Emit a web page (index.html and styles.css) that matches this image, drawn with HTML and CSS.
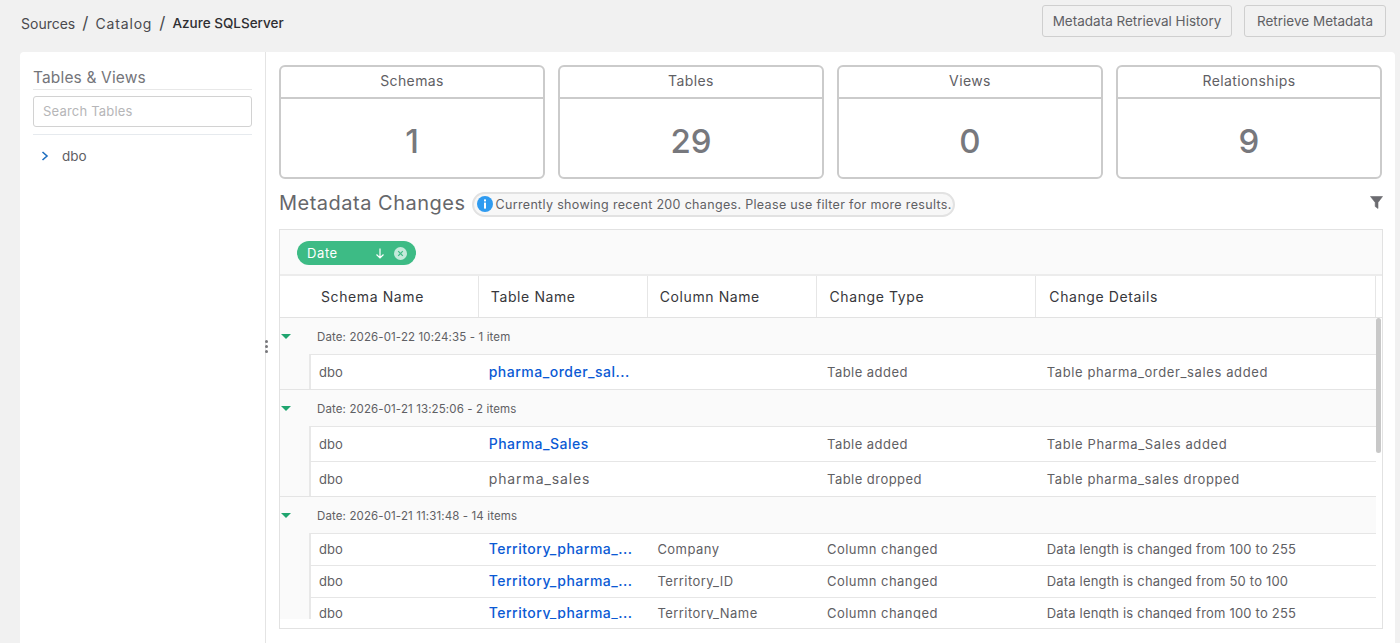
FILE: index.html
```html
<!DOCTYPE html>
<html>
<head>
    <title>Catalog</title>
    <link rel="stylesheet" href="styles.css">
</head>
<body>
    <header class="topBar">
        <nav class="breadcrumb">
            <span>Sources</span><span class="sep">/</span><span class="crumb">Catalog</span><span class="sep">/</span><span class="current">Azure SQLServer</span>
        </nav>
        <div class="topActions">
            <button class="topButton historyButton">Metadata Retrieval History</button>
            <button class="topButton retrieveButton">Retrieve Metadata</button>
        </div>
    </header>

    <main class="panel">
        <aside class="sidebar">
            <h2 class="sideTitle">Tables &amp; Views</h2>
            <input class="searchBox" type="text" placeholder="Search Tables">
            <div class="treeItem">
                <svg class="treeArrow" width="8" height="10" viewBox="0 0 8 10"><path d="M1.5 1 L6 5 L1.5 9" fill="none" stroke="#1f6fc0" stroke-width="1.6"/></svg>
                <span>dbo</span>
            </div>
        </aside>

        <div class="splitter"><i></i><i></i><i></i></div>

        <section class="content">
            <div class="stats">
                <div class="statCard"><div class="statLabel">Schemas</div><div class="statValue">1</div></div>
                <div class="statCard"><div class="statLabel">Tables</div><div class="statValue">29</div></div>
                <div class="statCard"><div class="statLabel">Views</div><div class="statValue">0</div></div>
                <div class="statCard"><div class="statLabel">Relationships</div><div class="statValue">9</div></div>
            </div>

            <div class="changesHead">
                <h2 class="changesTitle">Metadata Changes</h2>
                <div class="notePill">
                    <svg width="16" height="16" viewBox="0 0 16 16"><circle cx="8" cy="8" r="8" fill="#2f9bf0"/><rect x="7" y="6.6" width="2" height="6" fill="#fff"/><rect x="7" y="3.4" width="2" height="2" fill="#fff"/></svg>
                    <span>Currently showing recent 200 changes. Please use filter for more results.</span>
                </div>
                <svg class="filterIcon" width="13" height="13" viewBox="0 0 13 13"><path d="M0.5 0.5 H12.5 L8 6.5 V12.5 L5.2 10.5 V6.5 Z" fill="#6b6b70" stroke="#6b6b70" stroke-width="0.6" stroke-linejoin="round"/></svg>
            </div>

            <div class="grid">
                <div class="groupBar">
                    <div class="chip">
                        <span class="chipText">Date</span>
                        <svg width="10" height="11" viewBox="0 0 10 11"><path d="M5 0.5 V10 M1.5 6.5 L5 10 L8.5 6.5" fill="none" stroke="#fff" stroke-width="1.2"/></svg>
                        <svg width="13" height="13" viewBox="0 0 13 13"><circle cx="6.5" cy="6.5" r="6.5" fill="#c4eadb"/><path d="M4.2 4.2 L8.8 8.8 M8.8 4.2 L4.2 8.8" stroke="#3dbb85" stroke-width="1.2"/></svg>
                    </div>
                </div>

                <div class="headRow">
                    <div class="headCell colSchema">Schema Name</div>
                    <div class="headCell colTable">Table Name</div>
                    <div class="headCell colColumn">Column Name</div>
                    <div class="headCell colType">Change Type</div>
                    <div class="headCell colDetails">Change Details</div>
                </div>

                <div class="gridBody">
                    <div class="gridRows">
                        <div class="groupRow"><span class="caret"></span>Date: 2026-01-22 10:24:35 - 1 item</div>
                        <div class="dataRow tall">
                            <div class="cell colSchema">dbo</div>
                            <div class="cell colTable"><a class="tableLink">pharma_order_sal...</a></div>
                            <div class="cell colColumn"></div>
                            <div class="cell colType">Table added</div>
                            <div class="cell colDetails">Table pharma_order_sales added</div>
                        </div>

                        <div class="groupRow"><span class="caret"></span>Date: 2026-01-21 13:25:06 - 2 items</div>
                        <div class="dataRow tall">
                            <div class="cell colSchema">dbo</div>
                            <div class="cell colTable"><a class="tableLink">Pharma_Sales</a></div>
                            <div class="cell colColumn"></div>
                            <div class="cell colType">Table added</div>
                            <div class="cell colDetails">Table Pharma_Sales added</div>
                        </div>
                        <div class="dataRow tall">
                            <div class="cell colSchema">dbo</div>
                            <div class="cell colTable plainName">pharma_sales</div>
                            <div class="cell colColumn"></div>
                            <div class="cell colType">Table dropped</div>
                            <div class="cell colDetails">Table pharma_sales dropped</div>
                        </div>

                        <div class="groupRow"><span class="caret"></span>Date: 2026-01-21 11:31:48 - 14 items</div>
                        <div class="dataRow">
                            <div class="cell colSchema">dbo</div>
                            <div class="cell colTable"><a class="tableLink">Territory_pharma_...</a></div>
                            <div class="cell colColumn">Company</div>
                            <div class="cell colType">Column changed</div>
                            <div class="cell colDetails lengthNote">Data length is changed from 100 to 255</div>
                        </div>
                        <div class="dataRow">
                            <div class="cell colSchema">dbo</div>
                            <div class="cell colTable"><a class="tableLink">Territory_pharma_...</a></div>
                            <div class="cell colColumn">Territory_ID</div>
                            <div class="cell colType">Column changed</div>
                            <div class="cell colDetails lengthNote">Data length is changed from 50 to 100</div>
                        </div>
                        <div class="dataRow">
                            <div class="cell colSchema">dbo</div>
                            <div class="cell colTable"><a class="tableLink">Territory_pharma_...</a></div>
                            <div class="cell colColumn">Territory_Name</div>
                            <div class="cell colType">Column changed</div>
                            <div class="cell colDetails lengthNote">Data length is changed from 100 to 255</div>
                        </div>
                    </div>
                    <div class="scrollThumb"></div>
                </div>
            </div>
        </section>
    </main>
</body>
</html>
```

FILE: styles.css
```css
html, body {
    height: 100%;
}

body {
    margin: 0;
    height: 643px;
    overflow: hidden;
    background-color: #f1f1f1;
    font-family: "Inter", "Liberation Sans", sans-serif;
    color: #5f6064;
}

h2 {
    margin: 0;
    font-weight: 400;
}

.topBar {
    display: flex;
    justify-content: space-between;
    height: 52px;
    padding: 5px 14px 0 21px;
    box-sizing: border-box;
}

.breadcrumb {
    display: flex;
    gap: 7px;
    align-items: center;
    height: 36px;
    font-size: 14px;
    color: #4a4a4e;
}

.breadcrumb .sep {
    font-size: 17px;
}

.breadcrumb .crumb {
    letter-spacing: 0.85px;
}

.breadcrumb .current {
    color: #2e2e32;
    font-size: 13.5px;
    font-weight: 500;
}

.topActions {
    display: flex;
    gap: 12px;
}

.topButton {
    height: 32px;
    border: 1px solid #cfcfcf;
    border-radius: 3px;
    background-color: #f1f1f1;
    color: #5f6064;
    font-family: inherit;
    font-size: 13.5px;
    padding: 0;
}

.historyButton {
    width: 190px;
}

.retrieveButton {
    width: 142px;
}

.panel {
    display: flex;
    width: 1375px;
    height: 591px;
    margin-left: 20px;
    background-color: #fff;
    border-radius: 4px 4px 0 0;
}

.sidebar {
    width: 246px;
    flex-shrink: 0;
    padding: 15px 13px 0;
    box-sizing: border-box;
    border-right: 1px solid #e4e4e4;
}

.sideTitle {
    font-size: 15.5px;
    line-height: 21px;
    letter-spacing: 0.15px;
    color: #74757a;
    padding-bottom: 1px;
    border-bottom: 1px solid #e8e8e8;
}

.searchBox {
    display: block;
    width: 100%;
    height: 31px;
    margin: 6px 0 7px;
    padding: 0 9px 2px;
    box-sizing: border-box;
    border: 1px solid #d2d2d2;
    border-radius: 3px;
    font-family: inherit;
    font-size: 13px;
    letter-spacing: 0.2px;
    outline: none;
}

.searchBox::placeholder {
    color: #b6b6b8;
}

.treeItem {
    display: flex;
    align-items: center;
    gap: 13px;
    height: 42px;
    padding-left: 8px;
    border-top: 1px solid #e6eaee;
    font-size: 13.5px;
}

.splitter {
    position: relative;
    width: 0;
}

.splitter i {
    display: block;
    position: relative;
    left: -1px;
    top: 288px;
    width: 3px;
    height: 3px;
    margin-bottom: 2px;
    border-radius: 50%;
    background-color: #77777b;
}

.content {
    flex: 1;
    padding: 13px 12px 0 13px;
    min-width: 0;
}

.stats {
    display: grid;
    grid-template-columns: repeat(4, 266px);
    column-gap: 13px;
}

.statCard {
    height: 114px;
    box-sizing: border-box;
    border: 2px solid #cbcbcb;
    border-radius: 6px;
    text-align: center;
}

.statLabel {
    height: 32px;
    line-height: 27px;
    box-sizing: border-box;
    border-bottom: 2px solid #cbcbcb;
    font-size: 14px;
    letter-spacing: 0.4px;
}

.statValue {
    line-height: 84px;
    font-size: 33px;
    font-weight: 500;
    color: #77787d;
}

.changesHead {
    display: flex;
    align-items: center;
    height: 50px;
}

.changesTitle {
    font-size: 20px;
    letter-spacing: 0.5px;
    color: #66676b;
    margin-right: 6px;
    padding-bottom: 2px;
    white-space: nowrap;
}

.notePill {
    display: flex;
    align-items: center;
    gap: 3px;
    height: 25px;
    width: 483px;
    box-sizing: border-box;
    padding-left: 3px;
    border: 2px solid #e2e2e2;
    border-radius: 13px;
    background-color: #f7f7f7;
    font-size: 12.5px;
    letter-spacing: 0.33px;
    white-space: nowrap;
}

.filterIcon {
    margin-left: auto;
    margin-top: -4px;
}

.grid {
    width: 1104px;
    height: 400px;
    box-sizing: border-box;
    border: 1px solid #e2e2e2;
    display: flex;
    flex-direction: column;
}

.groupBar {
    height: 46px;
    flex-shrink: 0;
    box-sizing: border-box;
    padding-top: 11px;
    padding-left: 17px;
    background-color: #fafafa;
    border-bottom: 2px solid #ececec;
}

.chip {
    display: flex;
    align-items: center;
    width: 119px;
    height: 24px;
    box-sizing: border-box;
    padding: 0 9px 0 10px;
    border-radius: 12px;
    background-color: #3dbb85;
    color: #fff;
    font-size: 13px;
    letter-spacing: 0.6px;
}

.chipText {
    flex: 1;
}

.chip svg + svg {
    margin-left: 9px;
}

.headRow {
    display: flex;
    flex-shrink: 0;
    height: 42px;
    padding-left: 30px;
    box-sizing: border-box;
    border-bottom: 1px solid #e2e2e2;
    padding-right: 6px;
}

.headCell {
    display: flex;
    align-items: center;
    box-sizing: border-box;
    padding-left: 12px;
    border-right: 1px solid #e6e6e6;
    font-size: 14px;
    letter-spacing: 0.6px;
    color: #37373b;
}

.headCell.colSchema {
    padding-left: 11px;
}

.headCell.colType,
.headCell.colDetails {
    padding-left: 13px;
}

.colSchema,
.colTable,
.colColumn {
    width: 169px;
}

.colType {
    width: 220px;
}

.colDetails {
    width: 340px;
}

.gridBody {
    position: relative;
    height: 301px;
    flex-shrink: 0;
    margin-right: 6px;
}

.gridRows {
    height: 100%;
    overflow: hidden;
    background-color: #fafafa;
}

.groupRow {
    display: flex;
    align-items: center;
    height: 37px;
    box-sizing: border-box;
    padding-top: 1px;
    border-top: 1px solid #e4e4e4;
    font-size: 11.5px;
    letter-spacing: 0.12px;
    color: #5f6064;
}

.groupRow:first-child {
    height: 36px;
    border-top: 0;
}

.caret {
    width: 0;
    height: 0;
    margin: 0 26px 0 1px;
    border-left: 5px solid transparent;
    border-right: 5px solid transparent;
    border-top: 5px solid #1fa56f;
}

.dataRow {
    display: flex;
    height: 32px;
    margin-left: 29px;
    box-sizing: border-box;
    padding-bottom: 2px;
    background-color: #fff;
    border-left: 2px solid #e8e8e8;
    border-top: 1px solid #e6e6e6;
    font-size: 13px;
    letter-spacing: 0.45px;
}

.dataRow.tall {
    height: 35px;
    padding-bottom: 1px;
}

.cell {
    display: flex;
    align-items: center;
    box-sizing: border-box;
    padding-left: 9px;
    white-space: nowrap;
    overflow: hidden;
}

.cell.colSchema {
    padding-left: 8px;
    letter-spacing: 0;
}

.cell.colType,
.cell.colDetails {
    padding-left: 10px;
}

.cell.colDetails {
    letter-spacing: 0.62px;
}

.cell.lengthNote {
    letter-spacing: 0.2px;
}

.tableLink {
    color: #0b5ad4;
    font-size: 14px;
    letter-spacing: 0.5px;
    font-weight: 500;
}

.plainName {
    font-size: 14px;
    letter-spacing: 0.9px;
}

.scrollThumb {
    position: absolute;
    top: 0;
    right: -5px;
    width: 5px;
    height: 135px;
    border-radius: 3px;
    background-color: #c8c8c8;
}
```
